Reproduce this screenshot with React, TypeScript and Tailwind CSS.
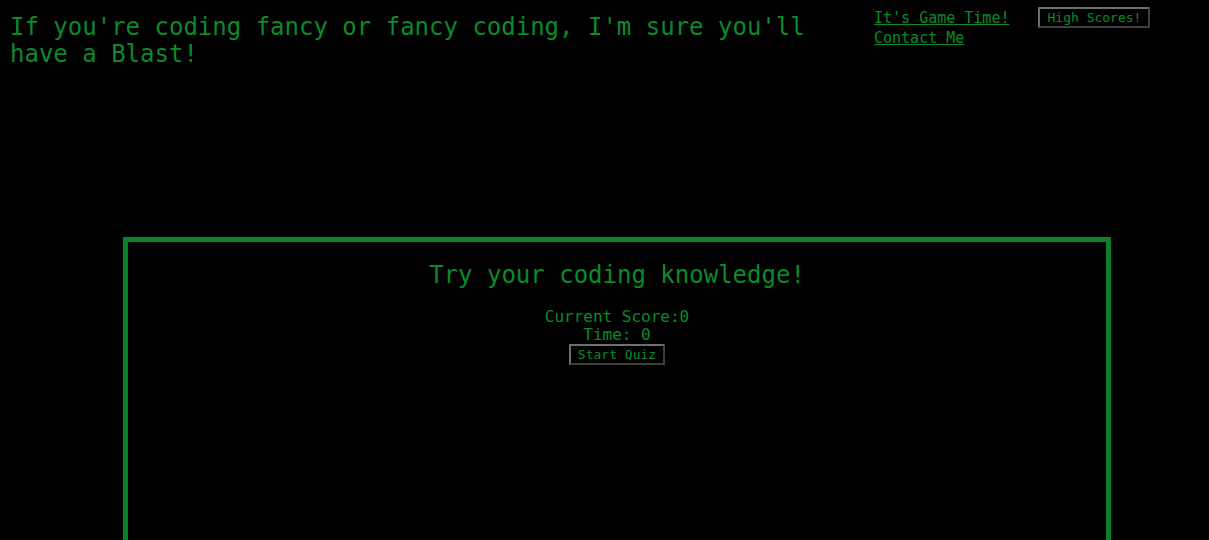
export default function App() {
  return (
    <div className="min-h-[540px] bg-black text-[#0b8a2b]" style={{ fontFamily: '"DejaVu Sans Mono", monospace' }}>
      <header className="flex items-start">
        <h1 className="ml-[10px] mt-[14px] w-[830px] text-[24px] leading-[27px] font-normal">
          If you're coding fancy or fancy coding, I'm sure you'll have a Blast!
        </h1>
        <nav className="ml-[34px] mt-[8px] flex items-start">
          <div className="flex flex-col text-[15px] leading-[20px]">
            <a href="#" className="underline">It's Game Time!</a>
            <a href="#" className="underline">Contact Me</a>
          </div>
          <button className="ml-[29px] -mt-[1px] h-[21px] w-[112px] border-2 border-t-[#6e6e6e] border-l-[#6e6e6e] border-r-[#3f3f3f] border-b-[#3f3f3f] bg-black text-[13px] leading-[16px] text-[#0b8a2b]">
            High Scores!
          </button>
        </nav>
      </header>

      <main className="ml-[123px] mt-[169px] h-[320px] w-[988px] border-[5px] border-b-0 border-[#0b8128] text-center">
        <h2 className="mt-[19px] text-[24px] leading-[28px]">Try your coding knowledge!</h2>
        <div className="mt-[19px] text-[16px] leading-[18px]">
          <p>Current Score:0</p>
          <p>Time: 0</p>
        </div>
        <button className="mx-auto block h-[21px] w-[96px] border-2 border-t-[#6e6e6e] border-l-[#6e6e6e] border-r-[#3f3f3f] border-b-[#3f3f3f] bg-black text-[13px] leading-[16px] text-[#0b8a2b]">
          Start Quiz
        </button>
      </main>
    </div>
  );
}
